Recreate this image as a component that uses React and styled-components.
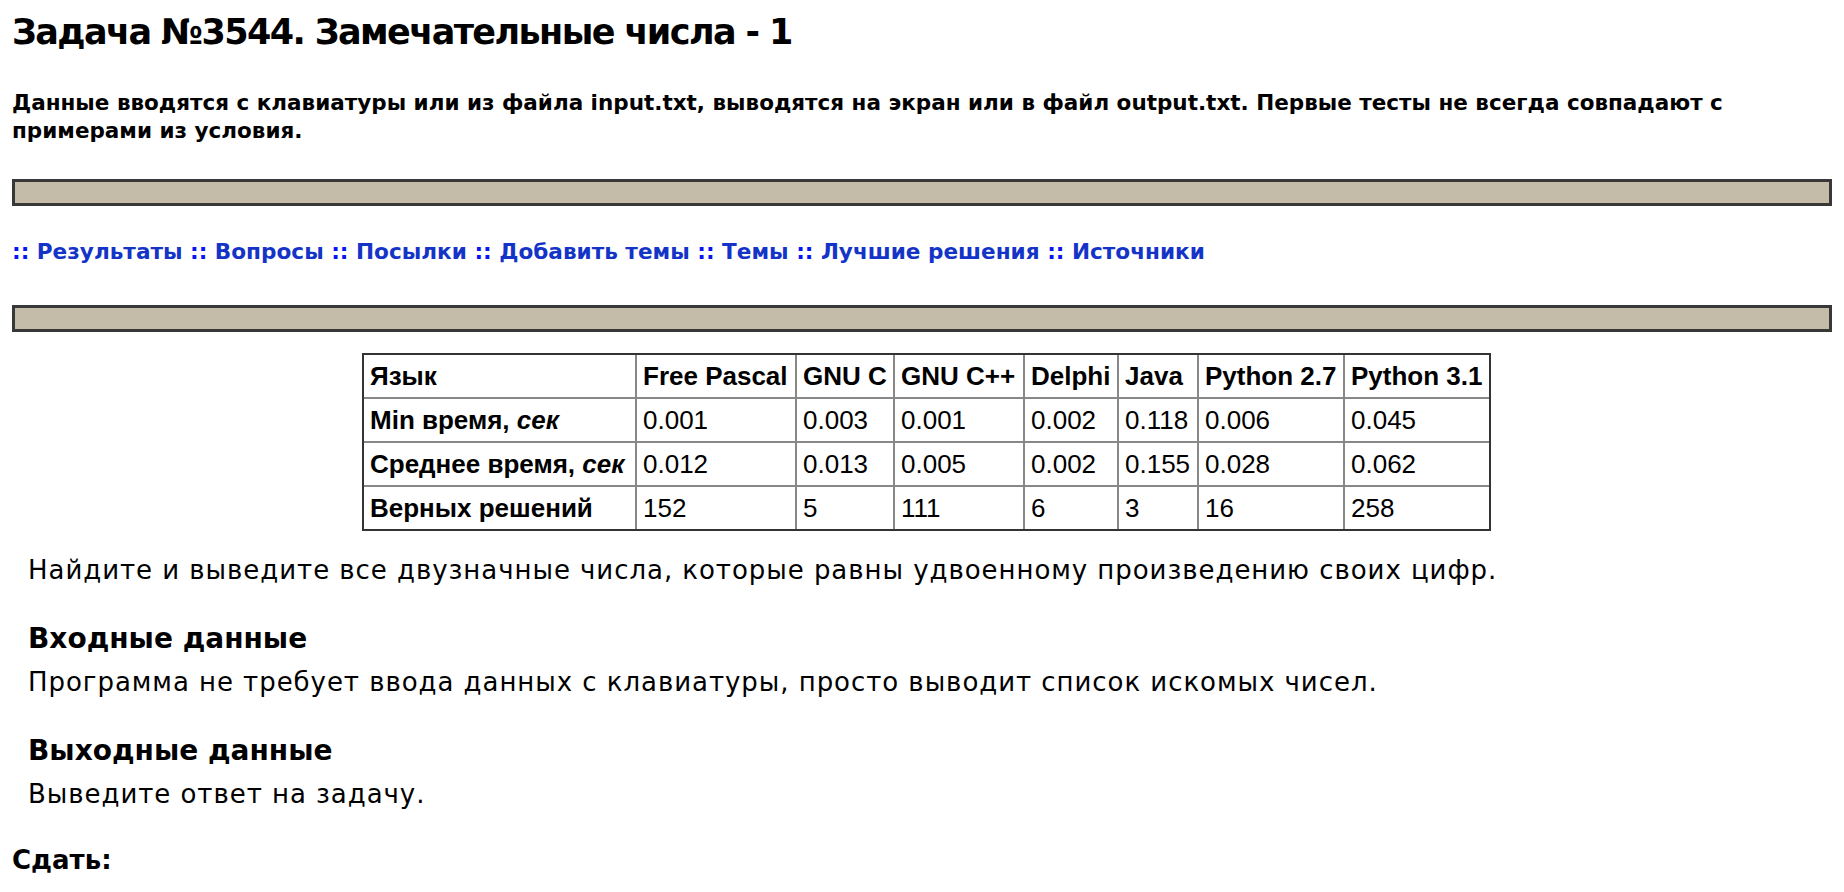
import React from 'react';
import styled, { createGlobalStyle } from 'styled-components';

const GlobalStyle = createGlobalStyle`
  body {
    margin: 0;
    background: #fff;
    color: #000;
    font-family: "DejaVu Sans", Verdana, sans-serif;
  }
`;

const Page = styled.div`
  padding: 0 12px;
`;

const Title = styled.h1`
  margin: 12px 0 0;
  font-size: 35px;
  line-height: 40px;
  letter-spacing: -1.6px;
  font-weight: 700;
`;

const Notice = styled.p`
  margin: 37px 0 0;
  font-size: 21.5px;
  line-height: 28px;
  font-weight: 700;
`;

const Bar = styled.div`
  margin-top: ${props => props.$top}px;
  height: 21px;
  background: #c4bca8;
  border: 3px solid #383838;
`;

const Menu = styled.nav`
  margin-top: 32px;
  font-size: 21.6px;
  line-height: 27px;
  font-weight: 700;
`;

const Sep = styled.span`
  color: #0a14f0;
`;

const MenuLink = styled.a`
  color: #1434c8;
  text-decoration: none;
`;

const StatsTable = styled.table`
  margin: 21px 0 0 350px;
  border: 2px solid #333;
  border-spacing: 0;
  font-family: "Liberation Sans", Arial, sans-serif;
  font-size: 26px;
  table-layout: fixed;

  td {
    height: 42px;
    padding: 0 6px;
    border-left: 2px solid #888;
    border-top: 2px solid #888;
    white-space: nowrap;
    vertical-align: middle;
  }
  td:first-child { border-left: none; font-weight: 700; }
  tr:first-child td { border-top: none; font-weight: 700; }
`;

const Statement = styled.div`
  padding-left: 16px;
`;

const Text = styled.p`
  margin: ${props => props.$top}px 0 0;
  font-size: 26px;
  line-height: 32px;
  letter-spacing: 0.95px;
`;

const Heading = styled.h2`
  margin: 36px 0 0;
  font-size: 28px;
  line-height: 34px;
  font-weight: 700;
`;

const Submit = styled.h3`
  margin: 34px 0 0;
  font-size: 26px;
  line-height: 32px;
  font-weight: 700;
`;

const links = ['Результаты', 'Вопросы', 'Посылки', 'Добавить темы', 'Темы', 'Лучшие решения', 'Источники'];

const widths = [271, 160, 98, 130, 94, 80, 146, 146];

const rows = [
  [<>Язык</>, 'Free Pascal', 'GNU C', 'GNU C++', 'Delphi', 'Java', 'Python 2.7', 'Python 3.1'],
  [<>Min время, <i>сек</i></>, '0.001', '0.003', '0.001', '0.002', '0.118', '0.006', '0.045'],
  [<>Среднее время, <i>сек</i></>, '0.012', '0.013', '0.005', '0.002', '0.155', '0.028', '0.062'],
  [<>Верных решений</>, '152', '5', '111', '6', '3', '16', '258'],
];

export default function App() {
  return (
    <Page>
      <GlobalStyle />
      <Title>Задача №3544. Замечательные числа - 1</Title>
      <Notice>
        Данные вводятся с клавиатуры или из файла input.txt, выводятся на экран или в файл output.txt. Первые тесты не всегда совпадают с примерами из условия.
      </Notice>
      <Bar $top={34} />
      <Menu>
        {links.map(l => (
          <React.Fragment key={l}>
            <Sep>:: </Sep>
            <MenuLink href="#">{l}</MenuLink>{' '}
          </React.Fragment>
        ))}
      </Menu>
      <Bar $top={40} />
      <StatsTable>
        <colgroup>
          {widths.map((w, i) => <col key={i} style={{ width: w }} />)}
        </colgroup>
        <tbody>
          {rows.map((r, i) => (
            <tr key={i}>
              {r.map((c, j) => <td key={j}>{c}</td>)}
            </tr>
          ))}
        </tbody>
      </StatsTable>
      <Statement>
        <Text $top={23}>Найдите и выведите все двузначные числа, которые равны удвоенному произведению своих цифр.</Text>
        <Heading>Входные данные</Heading>
        <Text $top={10}>Программа не требует ввода данных с клавиатуры, просто выводит список искомых чисел.</Text>
        <Heading>Выходные данные</Heading>
        <Text $top={10}>Выведите ответ на задачу.</Text>
      </Statement>
      <Submit>Сдать:</Submit>
    </Page>
  );
}
